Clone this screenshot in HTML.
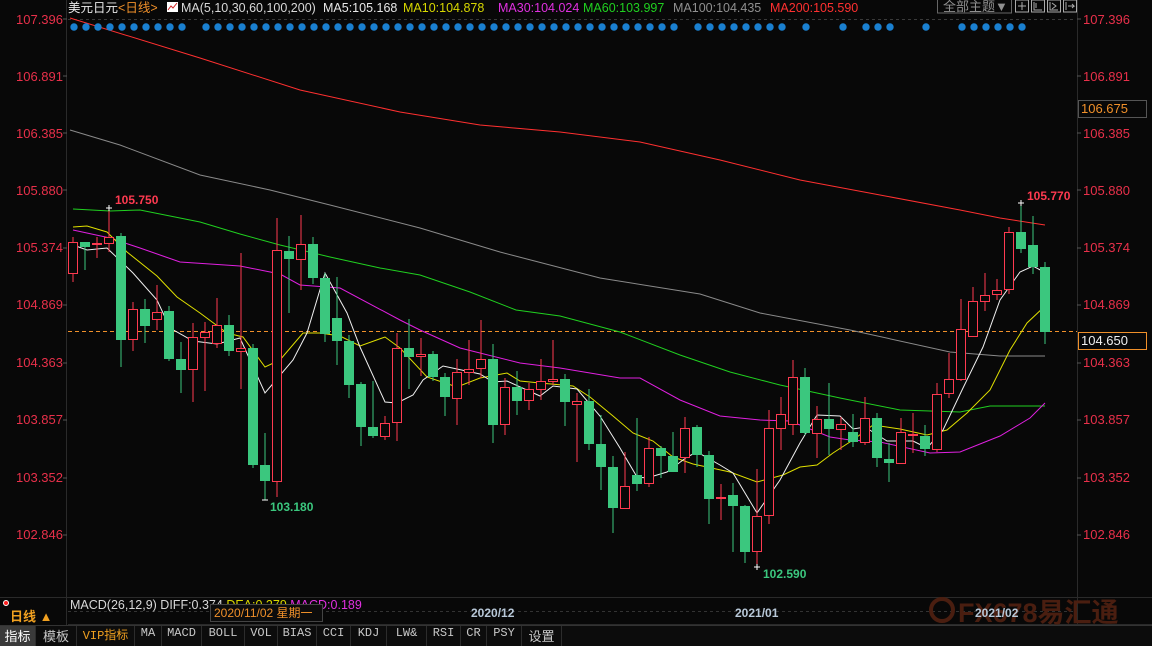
<!DOCTYPE html>
<html><head><meta charset="utf-8"><style>
html,body{margin:0;padding:0;background:#080808;}
body{width:1152px;height:645px;overflow:hidden;position:relative;font-family:"Liberation Sans","Noto Sans CJK SC",sans-serif;}
svg{position:absolute;left:0;top:0}
.tabs{position:absolute;left:0;top:625px;height:20px;width:1152px;background:#0c0c0c;border-top:1px solid #333;}
.tab{position:absolute;top:0;height:20px;line-height:19px;text-align:center;color:#c8c8c8;font:12px "Liberation Mono","Noto Sans CJK SC",monospace;border-right:1px solid #2c2c2c;box-sizing:border-box}
</style></head><body>
<svg width="1152" height="645" viewBox="0 0 1152 645" font-family="Liberation Sans, Noto Sans CJK SC, sans-serif">
<line x1="66.5" y1="0" x2="66.5" y2="625" stroke="#2a2a2a"/>
<line x1="1077.5" y1="0" x2="1077.5" y2="625" stroke="#2a2a2a"/>
<line x1="68" y1="19.5" x2="1075" y2="19.5" stroke="#3a3a3a" stroke-dasharray="3,3"/>
<line x1="0" y1="597.5" x2="1152" y2="597.5" stroke="#2a2a2a"/>
<line x1="68" y1="624.5" x2="1152" y2="624.5" stroke="#2a2a2a"/>
<line x1="68" y1="611.5" x2="1075" y2="611.5" stroke="#333" stroke-dasharray="3,3"/>
<g fill="#e8304a" font-size="13">
<g text-anchor="end">
<text x="63" y="24">107.396</text><text x="63" y="81">106.891</text><text x="63" y="138">106.385</text><text x="63" y="195">105.880</text><text x="63" y="252">105.374</text><text x="63" y="309">104.869</text><text x="63" y="367">104.363</text><text x="63" y="424">103.857</text><text x="63" y="482">103.352</text><text x="63" y="539">102.846</text>
</g>
<text x="1083" y="24">107.396</text><text x="1083" y="81">106.891</text><text x="1083" y="138">106.385</text><text x="1083" y="195">105.880</text><text x="1083" y="252">105.374</text><text x="1083" y="309">104.869</text><text x="1083" y="367">104.363</text><text x="1083" y="424">103.857</text><text x="1083" y="482">103.352</text><text x="1083" y="539">102.846</text>
</g>
<g stroke="#555"><path d="M63 19h4M63 76h4M63 133h4M63 190h4M63 248h4M63 305h4M63 363h4M63 420h4M63 478h4M63 535h4M1077 19h4M1077 76h4M1077 133h4M1077 190h4M1077 248h4M1077 305h4M1077 363h4M1077 420h4M1077 478h4M1077 535h4"/></g>
<rect x="1078.5" y="100.5" width="68" height="17" fill="#080808" stroke="#555"/>
<text x="1081" y="113" fill="#f0902a" font-size="13">106.675</text>
<rect x="1078.5" y="332.5" width="68" height="17" fill="#080808" stroke="#f0902a"/>
<text x="1081" y="345" fill="#f0f0f0" font-size="13">104.650</text>
<line x1="68" y1="331.5" x2="1077" y2="331.5" stroke="#f0902a" stroke-dasharray="4,3"/>
<text y="12" font-size="12.5"><tspan x="68" fill="#e8e8e8">美元日元</tspan><tspan fill="#f0902a">&lt;日线&gt;</tspan></text>
<rect x="167" y="2" width="11" height="10" fill="#fff"/><path d="M168 10l3-4 2 2 4-5" stroke="#d02020" fill="none"/>
<g font-size="12.5"><text x="181" y="12" fill="#d8d8d8">MA(5,10,30,60,100,200)</text><text x="323" y="12" fill="#e8e8e8">MA5:105.168</text><text x="403" y="12" fill="#d8d800">MA10:104.878</text><text x="498" y="12" fill="#e030e0">MA30:104.024</text><text x="583" y="12" fill="#20d020">MA60:103.997</text><text x="673" y="12" fill="#909090">MA100:104.435</text><text x="770" y="12" fill="#ff3030">MA200:105.590</text></g>
<rect x="937.5" y="-1" width="74" height="14" fill="none" stroke="#666"/>
<text x="943" y="11" fill="#909090" font-size="13">全部主题▼</text>
<g fill="none" stroke="#aaa"><rect x="1015.5" y="0" width="13" height="12"/><rect x="1031.5" y="0" width="13" height="12"/><rect x="1047.5" y="0" width="13" height="12"/><rect x="1063.5" y="0" width="13" height="12"/>
<path d="M1022 2v8M1018 6h8M1034 2v8h8M1036 3v5M1050 2v8h8M1052 3l4 3-4 3M1066 2v8M1068 6h6l-2-2M1074 6l-2 2"/></g>
<g fill="#4a1e10" font-size="27" font-weight="bold">
<circle cx="942" cy="610" r="11" fill="none" stroke="#4a1e10" stroke-width="4"/>
<text x="958" y="622">FX678易汇通</text>
</g>
<polyline fill="none" stroke="#ff3030" points="70,18 200,58 300,90 400,112 480,125 560,132 640,142 720,160 800,180 880,195 960,210 1000,218 1045,225"/>
<polyline fill="none" stroke="#8a8a8a" points="70,130 120,145 200,175 270,190 330,205 420,228 500,252 600,278 700,294 760,313 850,330 950,352 1000,356 1045,356"/>
<polyline fill="none" stroke="#20d020" points="73,209 110,211 140,210 160,214 200,222 240,234 280,245 330,257 380,268 420,275 470,292 516,310 560,316 620,332 680,355 730,372 780,385 840,398 900,410 960,412 990,406 1045,406"/>
<polyline fill="none" stroke="#e020e0" points="73,230 110,238 140,248 160,255 180,262 240,266 280,274 300,285 340,288 400,320 420,330 460,348 520,363 560,368 620,378 640,378 680,400 720,416 760,420 790,421 830,437 850,440 880,442 930,453 960,452 1000,436 1030,418 1045,403"/>
<polyline fill="none" stroke="#e0e000" points="73,227 87,226 107,232 127,252 157,276 177,297 200,313 227,333 243,337 265,367 280,360 303,333 320,333 340,336 360,346 385,337 400,348 427,377 457,387 480,378 507,373 520,381 540,383 573,386 590,397 613,416 633,433 653,441 673,457 693,464 730,472 757,482 783,475 800,467 817,465 833,453 853,440 873,425 900,429 927,435 947,430 967,413 990,390 1010,350 1027,323 1044,307"/>
<polyline fill="none" stroke="#f0f0f0" points="73,245 87,250 107,248 133,273 157,300 170,328 193,341 217,344 240,338 265,393 293,360 307,333 325,273 347,313 360,347 385,402 397,403 413,395 423,380 443,366 457,369 480,374 493,382 507,381 540,396 553,386 577,389 600,416 620,448 637,477 647,478 667,472 687,457 697,452 720,465 733,473 757,513 780,480 800,443 817,415 840,416 853,429 865,427 887,441 913,441 927,448 943,430 963,388 983,347 1000,300 1020,272 1033,266 1044,272"/>
<path stroke="#3bc77e" fill="none" d="M85 242V270M121 233V367M145 299V343M169 306V361M181 342V393M229 315V356M253 344V468M265 433V500M289 236V313M313 237V284M325 273V342M337 277V365M349 335V398M361 382V446M373 381V438M409 319V389M433 351V381M445 373V416M493 344V443M517 371V415M565 374V426M589 389V450M601 415V490M613 456V533M637 418V491M661 446V478M673 432V472M697 425V467M709 451V524M733 483V552M745 505V563M805 368V435M829 383V455M853 414V447M877 413V467M889 443V482M925 425V456M1021 203V253M1033 216V274M1045 262V344"/>
<path stroke="#ff3a50" fill="none" d="M73 237V282M97 237V258M109 208V252M133 302V351M157 285V330M193 323V402M205 322V391M217 298V348M241 253V389M277 218V497M301 215V290M385 416V440M397 333V441M421 338V376M457 359V425M469 340V385M481 320V378M505 378V435M529 383V410M541 359V400M553 340V385M577 393V462M625 452V508M649 437V487M685 417V473M721 484V520M757 469V567M769 410V524M781 397V450M793 360V435M817 406V458M841 417V450M865 397V445M901 418V464M913 413V453M937 383V452M949 353V398M961 299V381M973 287V336M985 273V311M997 279V300M1009 227V294"/>
<g fill="#3bc77e">
<rect x="80" y="242" width="10" height="5"/><rect x="116" y="236" width="10" height="104"/><rect x="140" y="309" width="10" height="17"/><rect x="164" y="311" width="10" height="48"/><rect x="176" y="359" width="10" height="11"/><rect x="224" y="325" width="10" height="26"/><rect x="248" y="348" width="10" height="117"/><rect x="260" y="465" width="10" height="16"/><rect x="284" y="251" width="10" height="8"/><rect x="308" y="244" width="10" height="34"/><rect x="320" y="278" width="10" height="56"/><rect x="332" y="318" width="10" height="23"/><rect x="344" y="341" width="10" height="44"/><rect x="356" y="384" width="10" height="43"/><rect x="368" y="427" width="10" height="9"/><rect x="404" y="348" width="10" height="9"/><rect x="428" y="354" width="10" height="23"/><rect x="440" y="377" width="10" height="20"/><rect x="488" y="359" width="10" height="66"/><rect x="512" y="387" width="10" height="14"/><rect x="560" y="379" width="10" height="23"/><rect x="584" y="401" width="10" height="43"/><rect x="596" y="444" width="10" height="23"/><rect x="608" y="467" width="10" height="41"/><rect x="632" y="475" width="10" height="9"/><rect x="656" y="448" width="10" height="8"/><rect x="668" y="456" width="10" height="16"/><rect x="692" y="427" width="10" height="28"/><rect x="704" y="455" width="10" height="44"/><rect x="728" y="495" width="10" height="11"/><rect x="740" y="506" width="10" height="46"/><rect x="800" y="377" width="10" height="56"/><rect x="824" y="419" width="10" height="10"/><rect x="848" y="432" width="10" height="10"/><rect x="872" y="418" width="10" height="40"/><rect x="884" y="459" width="10" height="4"/><rect x="920" y="436" width="10" height="13"/><rect x="1016" y="232" width="10" height="17"/><rect x="1028" y="245" width="10" height="22"/><rect x="1040" y="267" width="10" height="65"/>
</g>
<g fill="#080808" stroke="#ff3a50">
<rect x="68.5" y="242.5" width="9" height="31"/><rect x="92.5" y="243.5" width="9" height="1"/><rect x="104.5" y="237.5" width="9" height="6"/><rect x="128.5" y="309.5" width="9" height="30"/><rect x="152.5" y="312.5" width="9" height="7"/><rect x="188.5" y="337.5" width="9" height="32"/><rect x="200.5" y="332.5" width="9" height="5"/><rect x="212.5" y="325.5" width="9" height="18"/><rect x="236.5" y="348.5" width="9" height="3"/><rect x="272.5" y="250.5" width="9" height="231"/><rect x="296.5" y="244.5" width="9" height="15"/><rect x="380.5" y="423.5" width="9" height="13"/><rect x="392.5" y="348.5" width="9" height="74"/><rect x="416.5" y="354.5" width="9" height="2"/><rect x="452.5" y="372.5" width="9" height="26"/><rect x="464.5" y="369.5" width="9" height="3"/><rect x="476.5" y="359.5" width="9" height="9"/><rect x="500.5" y="387.5" width="9" height="37"/><rect x="524.5" y="389.5" width="9" height="11"/><rect x="536.5" y="381.5" width="9" height="8"/><rect x="548.5" y="379.5" width="9" height="2"/><rect x="572.5" y="401.5" width="9" height="3"/><rect x="620.5" y="486.5" width="9" height="22"/><rect x="644.5" y="448.5" width="9" height="35"/><rect x="680.5" y="428.5" width="9" height="29"/><rect x="716.5" y="497.5" width="9" height="1"/><rect x="752.5" y="516.5" width="9" height="35"/><rect x="764.5" y="428.5" width="9" height="87"/><rect x="776.5" y="414.5" width="9" height="14"/><rect x="788.5" y="377.5" width="9" height="47"/><rect x="812.5" y="419.5" width="9" height="14"/><rect x="836.5" y="424.5" width="9" height="5"/><rect x="860.5" y="418.5" width="9" height="24"/><rect x="896.5" y="432.5" width="9" height="31"/><rect x="908.5" y="434.5" width="9" height="1"/><rect x="932.5" y="394.5" width="9" height="55"/><rect x="944.5" y="379.5" width="9" height="14"/><rect x="956.5" y="329.5" width="9" height="50"/><rect x="968.5" y="301.5" width="9" height="35"/><rect x="980.5" y="295.5" width="9" height="6"/><rect x="992.5" y="290.5" width="9" height="4"/><rect x="1004.5" y="232.5" width="9" height="57"/>
</g>
<g stroke="#fff"><path d="M106 208h6M109 205v6M262 500h6M754 567h6M757 564v6M1018 203h6M1021 200v6"/></g>
<g font-size="12" font-weight="bold">
<text x="115" y="204" fill="#ff3a50">105.750</text>
<text x="270" y="511" fill="#3bc77e">103.180</text>
<text x="763" y="578" fill="#3bc77e">102.590</text>
<text x="1027" y="200" fill="#ff3a50">105.770</text>
</g>
<circle cx="6" cy="603" r="2.5" fill="#ff2020" stroke="#fff" stroke-width="1"/>
<text x="70" y="609" font-size="12.5"><tspan fill="#d8d8d8">MACD(26,12,9) DIFF:0.374 </tspan><tspan fill="#d8d800">DEA:0.279 </tspan><tspan fill="#e030e0">MACD:0.189</tspan></text>
<text x="10" y="621" font-size="13" font-weight="bold" fill="#f0a020">日线 ▲</text>
<rect x="210.5" y="604.5" width="112" height="17" fill="#0c0c0c" stroke="#444"/>
<text x="214" y="617" font-size="12" fill="#f0902a">2020/11/02 星期一</text>
<g font-size="12" font-weight="bold" fill="#b8c8d8">
<text x="471" y="617">2020/12</text><text x="735" y="617">2021/01</text><text x="975" y="617">2021/02</text>
</g>
</svg>
<div class="tabs">
<div class="tab" style="left:0;width:36px;background:#3a3a3a;color:#fff;font-family:'Liberation Sans','Noto Sans CJK SC',sans-serif;font-size:13px">指标</div>
<div class="tab" style="left:36px;width:41px;font-family:'Liberation Sans','Noto Sans CJK SC',sans-serif;font-size:13px">模板</div>
<div class="tab" style="left:77px;width:58px;color:#f0a020">VIP指标</div>
<div class="tab" style="left:135px;width:27px">MA</div>
<div class="tab" style="left:162px;width:40px">MACD</div>
<div class="tab" style="left:202px;width:43px">BOLL</div>
<div class="tab" style="left:245px;width:33px">VOL</div>
<div class="tab" style="left:278px;width:39px">BIAS</div>
<div class="tab" style="left:317px;width:34px">CCI</div>
<div class="tab" style="left:351px;width:36px">KDJ</div>
<div class="tab" style="left:387px;width:40px">LW&amp;</div>
<div class="tab" style="left:427px;width:34px">RSI</div>
<div class="tab" style="left:461px;width:26px">CR</div>
<div class="tab" style="left:487px;width:35px">PSY</div>
<div class="tab" style="left:522px;width:40px;font-family:'Liberation Sans','Noto Sans CJK SC',sans-serif;font-size:13px">设置</div>
</div>
<svg width="1152" height="40" style="top:0"><g fill="#1a80d0">
<circle cx="74" cy="27" r="3.7"/><circle cx="86" cy="27" r="3.7"/><circle cx="98" cy="27" r="3.7"/><circle cx="110" cy="27" r="3.7"/><circle cx="122" cy="27" r="3.7"/><circle cx="134" cy="27" r="3.7"/><circle cx="146" cy="27" r="3.7"/><circle cx="158" cy="27" r="3.7"/><circle cx="170" cy="27" r="3.7"/><circle cx="182" cy="27" r="3.7"/>
<circle cx="206" cy="27" r="3.7"/><circle cx="218" cy="27" r="3.7"/><circle cx="230" cy="27" r="3.7"/><circle cx="242" cy="27" r="3.7"/><circle cx="254" cy="27" r="3.7"/><circle cx="266" cy="27" r="3.7"/><circle cx="278" cy="27" r="3.7"/><circle cx="290" cy="27" r="3.7"/><circle cx="302" cy="27" r="3.7"/><circle cx="314" cy="27" r="3.7"/><circle cx="326" cy="27" r="3.7"/><circle cx="338" cy="27" r="3.7"/><circle cx="350" cy="27" r="3.7"/><circle cx="362" cy="27" r="3.7"/><circle cx="374" cy="27" r="3.7"/><circle cx="386" cy="27" r="3.7"/><circle cx="398" cy="27" r="3.7"/><circle cx="410" cy="27" r="3.7"/><circle cx="422" cy="27" r="3.7"/><circle cx="434" cy="27" r="3.7"/><circle cx="446" cy="27" r="3.7"/><circle cx="458" cy="27" r="3.7"/><circle cx="470" cy="27" r="3.7"/><circle cx="482" cy="27" r="3.7"/><circle cx="494" cy="27" r="3.7"/><circle cx="506" cy="27" r="3.7"/><circle cx="518" cy="27" r="3.7"/><circle cx="530" cy="27" r="3.7"/><circle cx="542" cy="27" r="3.7"/><circle cx="554" cy="27" r="3.7"/><circle cx="566" cy="27" r="3.7"/><circle cx="578" cy="27" r="3.7"/><circle cx="590" cy="27" r="3.7"/><circle cx="602" cy="27" r="3.7"/><circle cx="614" cy="27" r="3.7"/><circle cx="626" cy="27" r="3.7"/><circle cx="638" cy="27" r="3.7"/><circle cx="650" cy="27" r="3.7"/><circle cx="662" cy="27" r="3.7"/><circle cx="674" cy="27" r="3.7"/>
<circle cx="698" cy="27" r="3.7"/><circle cx="710" cy="27" r="3.7"/><circle cx="722" cy="27" r="3.7"/><circle cx="734" cy="27" r="3.7"/><circle cx="746" cy="27" r="3.7"/><circle cx="758" cy="27" r="3.7"/><circle cx="770" cy="27" r="3.7"/><circle cx="782" cy="27" r="3.7"/>
<circle cx="806" cy="27" r="3.7"/><circle cx="843" cy="27" r="3.7"/><circle cx="866" cy="27" r="3.7"/><circle cx="878" cy="27" r="3.7"/><circle cx="890" cy="27" r="3.7"/><circle cx="926" cy="27" r="3.7"/>
<circle cx="962" cy="27" r="3.7"/><circle cx="974" cy="27" r="3.7"/><circle cx="986" cy="27" r="3.7"/><circle cx="998" cy="27" r="3.7"/><circle cx="1010" cy="27" r="3.7"/><circle cx="1022" cy="27" r="3.7"/>
</g></svg>
</body></html>
